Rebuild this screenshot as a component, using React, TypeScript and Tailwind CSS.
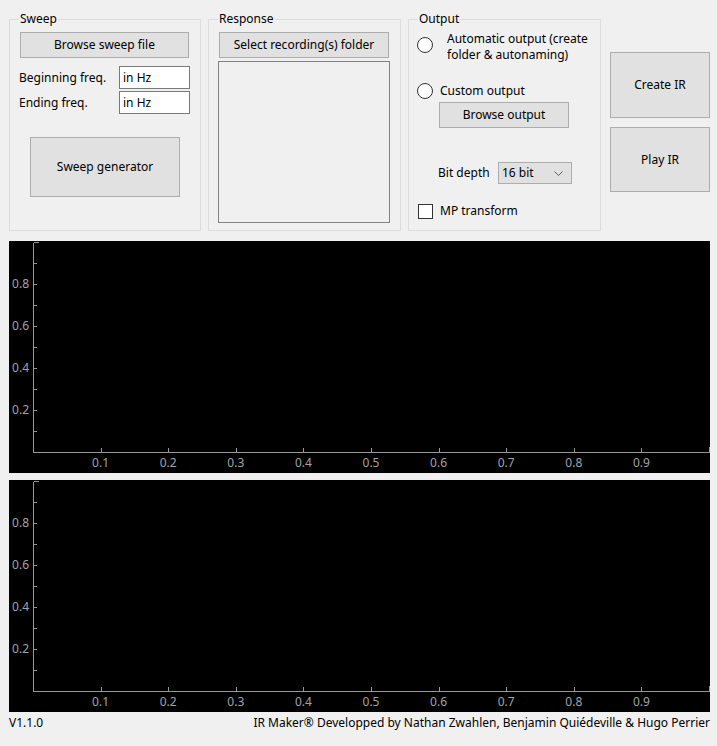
import type { ReactNode } from 'react'

const ui = "font-['Noto_Sans',sans-serif]"

function Btn({ className, children }: { className: string; children: ReactNode }) {
  return (
    <div className={`flex items-center justify-center bg-[#e1e1e1] border border-[#adadad] ${className}`}>
      {children}
    </div>
  )
}

function Group({ title, className, children }: { title: string; className: string; children: ReactNode }) {
  return (
    <fieldset className={`h-[220px] border border-[#dcdcdc] ${className}`}>
      <legend className="ml-[9px] px-[1px] leading-4">{title}</legend>
      {children}
    </fieldset>
  )
}

function Radio() {
  return <div className="w-[16px] h-[16px] shrink-0 rounded-full border border-[#333] bg-white" />
}

const yMajor = [0.2, 0.4, 0.6, 0.8]
const yMinor = [0.1, 0.3, 0.5, 0.7, 0.9]
const xMajor = [0.1, 0.2, 0.3, 0.4, 0.5, 0.6, 0.7, 0.8, 0.9]

function Chart({ className }: { className: string }) {
  const X0 = 24, X1 = 700, Y0 = 211, Y1 = 1
  const px = (v: number) => X0 + (X1 - X0) * v
  const py = (v: number) => Y0 - (Y0 - Y1) * v
  return (
    <div className={`w-[701px] h-[232px] bg-black ${className}`}>
      <svg width="701" height="232" shapeRendering="crispEdges">
        <g stroke="#969696" strokeWidth="1">
          <line x1={X0 + 0.5} y1={Y1 + 0.5} x2={X0 + 0.5} y2={Y0 + 0.5} />
          <line x1={X0 + 0.5} y1={Y0 + 0.5} x2={X1 + 0.5} y2={Y0 + 0.5} />
          <line x1={X0 + 0.5} y1={Y1 + 0.5} x2={X0 + 6} y2={Y1 + 0.5} />
          <line x1={X1 + 0.5} y1={Y0 - 5} x2={X1 + 0.5} y2={Y0 + 0.5} />
          {[...yMajor, ...yMinor].map(v => (
            <line key={v} x1={X0 + 0.5} y1={Math.round(py(v)) + 0.5} x2={X0 + 4} y2={Math.round(py(v)) + 0.5} />
          ))}
          {xMajor.map(v => (
            <line key={v} x1={Math.round(px(v)) + 0.5} y1={Y0 - 4} x2={Math.round(px(v)) + 0.5} y2={Y0 + 0.5} />
          ))}
        </g>
        <g fill="#a0a4a8" fontSize="12" fontFamily="'Noto Sans', sans-serif">
          {yMajor.map(v => (
            <text key={v} x={20} y={py(v) + 4} textAnchor="end">{v.toFixed(1)}</text>
          ))}
          {xMajor.map(v => (
            <text key={v} x={px(v)} y={226} textAnchor="middle">{v.toFixed(1)}</text>
          ))}
        </g>
      </svg>
    </div>
  )
}

export default function App() {
  return (
    <div className={`w-[717px] h-[746px] overflow-hidden bg-[#f0f0f0] text-[12px] text-black ${ui}`}>
      <div className="flex pt-[11px] pl-[9px]">
        <Group title="Sweep" className="w-[192px]">
          <Btn className="mt-[5px] ml-[10px] w-[169px] h-[26px]">Browse sweep file</Btn>
          <div className="mt-[8px] flex items-center h-[23px]">
            <span className="ml-[9px] w-[100px]">Beginning freq.</span>
            <div className="w-[71px] h-[23px] flex items-center px-[3px] bg-white border border-[#7a7a7a]">in Hz</div>
          </div>
          <div className="mt-[2px] flex items-center h-[23px]">
            <span className="ml-[9px] w-[100px]">Ending freq.</span>
            <div className="w-[71px] h-[23px] flex items-center px-[3px] bg-white border border-[#7a7a7a]">in Hz</div>
          </div>
          <Btn className="mt-[23px] ml-[20px] w-[150px] h-[60px]">Sweep generator</Btn>
        </Group>

        <Group title="Response" className="ml-[7px] w-[193px]">
          <Btn className="mt-[5px] ml-[10px] w-[170px] h-[26px]">Select recording(s) folder</Btn>
          <div className="mt-[3px] ml-[9px] w-[172px] h-[162px] border border-[#828282] bg-[#f0f0f0]" />
        </Group>

        <Group title="Output" className="ml-[7px] w-[193px]">
          <div className="mt-[4px] flex items-start">
            <div className="mt-[6px] ml-[8px]"><Radio /></div>
            <div className="ml-[14px] leading-[16px] h-[31px] overflow-hidden">
              Automatic output (create<br />folder &amp; autonaming)
            </div>
          </div>
          <div className="mt-[21px] flex items-center h-[16px]">
            <div className="ml-[8px]"><Radio /></div>
            <span className="ml-[7px]">Custom output</span>
          </div>
          <Btn className="mt-[3px] ml-[30px] w-[130px] h-[26px]">Browse output</Btn>
          <div className="mt-[34px] flex items-center h-[22px]">
            <span className="ml-[29px] w-[60px]">Bit depth</span>
            <div className="w-[74px] h-[22px] flex items-center justify-between pl-[3px] pr-[8px] bg-[#e1e1e1] border border-[#adadad]">
              <span>16 bit</span>
              <svg width="9" height="5" viewBox="0 0 9 5" fill="none" stroke="#5a5a5a" strokeWidth="1">
                <polyline points="0.5,0.5 4.5,4.5 8.5,0.5" />
              </svg>
            </div>
          </div>
          <div className="mt-[19px] flex items-center h-[16px]">
            <div className="ml-[9px] w-[15px] h-[15px] border border-[#333] bg-white" />
            <span className="ml-[7px]">MP transform</span>
          </div>
        </Group>

        <div className="ml-[9px] flex flex-col">
          <Btn className="mt-[41px] w-[100px] h-[66px]">Create IR</Btn>
          <Btn className="mt-[9px] w-[100px] h-[65px]">Play IR</Btn>
        </div>
      </div>

      <div className="pl-[9px]">
        <Chart className="mt-[10px]" />
        <Chart className="mt-[7px]" />
        <div className="mt-[3px] w-[701px] h-4 leading-4 flex justify-between">
          <span>V1.1.0</span>
          <span>IR Maker® Developped by Nathan Zwahlen, Benjamin Quiédeville &amp; Hugo Perrier</span>
        </div>
      </div>
    </div>
  )
}
